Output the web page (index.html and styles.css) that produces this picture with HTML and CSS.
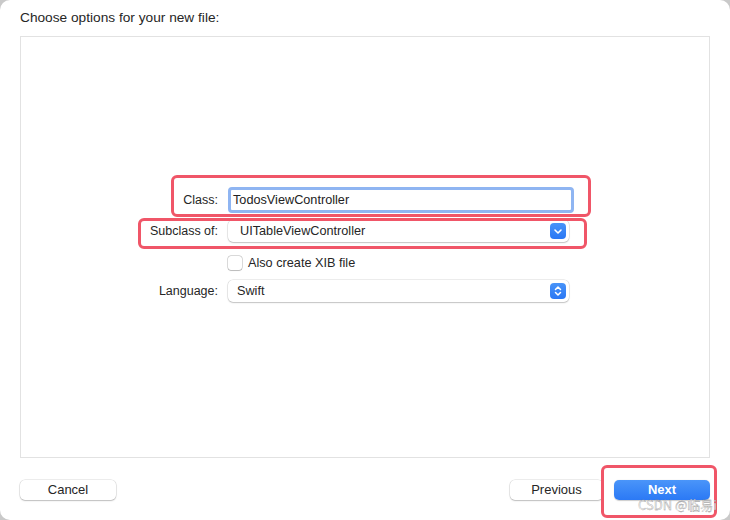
FILE: index.html
```html
<!DOCTYPE html>
<html>
<head>
<meta charset="utf-8">
<link rel="stylesheet" href="styles.css">
</head>
<body>
<div class="window">
  <div class="title">Choose options for your new file:</div>
  <div class="panel">
    <div class="form">
      <div class="label row-class">Class:</div>
      <div class="field row-class">TodosViewController</div>

      <div class="label row-sub">Subclass of:</div>
      <div class="popup row-sub">
        <span>UITableViewController</span>
        <span class="stepper">
          <svg width="16" height="16" viewBox="0 0 16 16"><path d="M5 7l3 3 3-3" fill="none" stroke="#fff" stroke-width="1.6" stroke-linecap="round" stroke-linejoin="round"/></svg>
        </span>
      </div>

      <div class="label row-check"></div>
      <label class="check row-check"><span class="box"></span>Also create XIB file</label>

      <div class="label row-lang">Language:</div>
      <div class="popup row-lang">
        <span class="swift">Swift</span>
        <span class="stepper">
          <svg width="16" height="16" viewBox="0 0 16 16"><path d="M5.5 6.5l2.5-2.5 2.5 2.5M5.5 9.5l2.5 2.5 2.5-2.5" fill="none" stroke="#fff" stroke-width="1.5" stroke-linecap="round" stroke-linejoin="round"/></svg>
        </span>
      </div>
    </div>
  </div>
  <div class="footer">
    <button class="btn">Cancel</button>
    <div class="right">
      <button class="btn prev">Previous</button>
      <button class="btn primary">Next</button>
    </div>
  </div>
  <div class="mark mark-class"></div>
  <div class="mark mark-sub"></div>
  <div class="mark mark-next"></div>
  <div class="watermark">CSDN @临易i</div>
</div>
</body>
</html>
```
FILE: styles.css
```css
* { box-sizing: border-box; }
html, body { margin: 0; padding: 0; }
body {
  width: 730px;
  height: 520px;
  background: #c9c9c9;
  font-family: "Liberation Sans", "Noto Sans CJK SC", Arial, sans-serif;
  font-size: 12.7px;
  color: #262626;
  overflow: hidden;
}
.window {
  position: relative;
  width: 730px;
  height: 520px;
  background: #ffffff;
  border-radius: 10px;
  display: flex;
  flex-direction: column;
}
.title {
  padding: 10px 0 0 20px;
  height: 36px;
  line-height: 16px;
  font-size: 13.7px;
  color: #262626;
}
.panel {
  margin: 0 20px;
  height: 422px;
  border: 1px solid #e2e2e2;
  background: #fff;
  padding-top: 150px;
}
.form {
  display: grid;
  grid-template-columns: 197px 346px;
  column-gap: 10px;
  align-items: center;
}
.label {
  text-align: right;
  color: #262626;
  font-size: 12.5px;
}
.row-class { height: 26px; }
.row-sub { height: 22px; margin-top: 7px; }
.row-check { height: 14px; margin-top: 14px; }
.row-lang { height: 22px; margin-top: 10px; }
.label.row-class, .label.row-sub, .label.row-lang { line-height: 22px; }
.label.row-class { line-height: 26px; }
.field {
  width: 346px;
  border: 3px solid #8fb5f2;
  border-radius: 4px;
  padding-left: 2px;
  line-height: 20px;
  color: #222;
  background: #fff;
}
.popup {
  width: 341px;
  border-radius: 5px;
  background: #fff;
  box-shadow: 0 0 0 0.5px rgba(0,0,0,0.14), 0 1px 1.5px rgba(0,0,0,0.18);
  display: flex;
  align-items: center;
  justify-content: space-between;
  padding: 0 3px 0 12px;
  line-height: 22px;
}
.popup .swift { margin-left: -3px; }
.stepper {
  width: 16px;
  height: 16px;
  border-radius: 4px;
  background: linear-gradient(#4893f8, #2a77f4);
  display: flex;
}
.check {
  display: flex;
  align-items: center;
  gap: 6px;
  line-height: 14px;
  color: #262626;
}
.box {
  flex: none;
  width: 14px;
  height: 14px;
  border-radius: 3px;
  background: #fff;
  box-shadow: 0 0 0 0.5px rgba(0,0,0,0.28), 0 0.5px 1px rgba(0,0,0,0.15);
}
.footer {
  display: flex;
  justify-content: space-between;
  padding: 22px 20px 0 20px;
}
.right { display: flex; gap: 11px; }
.btn {
  font-family: "Liberation Sans", Arial, sans-serif;
  font-size: 13px;
  height: 20px;
  width: 96px;
  border: none;
  border-radius: 5px;
  background: #fff;
  color: #262626;
  box-shadow: 0 0 0 0.5px rgba(0,0,0,0.14), 0 1px 1.5px rgba(0,0,0,0.2);
  padding: 0;
  line-height: 20px;
}
.btn.prev { width: 93px; }
.btn.primary {
  background: linear-gradient(#4a95f9, #2b79f5);
  color: #fff;
  font-weight: bold;
  box-shadow: 0 0.5px 1px rgba(0,0,0,0.2);
}
.mark {
  position: absolute;
  border: 3px solid #f05668;
  border-radius: 6px;
}
.mark-class { left: 171px; top: 175px; width: 420px; height: 42px; }
.mark-sub { left: 138px; top: 218px; width: 449px; height: 31px; }
.mark-next { left: 601px; top: 465px; width: 116px; height: 53px; }
.watermark {
  position: absolute;
  left: 638px;
  top: 498px;
  font-family: "Noto Sans CJK SC", "Liberation Sans", sans-serif;
  font-size: 13px;
  line-height: 14px;
  color: #f4f4f4;
  -webkit-text-stroke: 0.3px #8a8a8a;
}
```
